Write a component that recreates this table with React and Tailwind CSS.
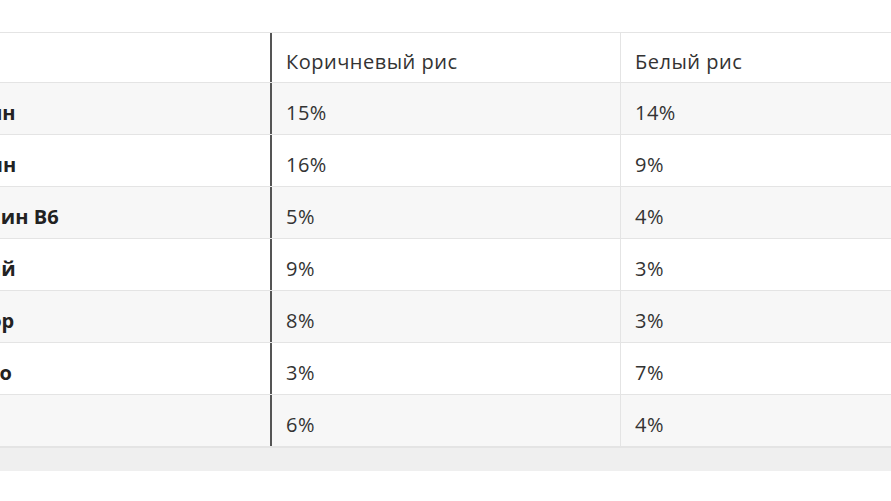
const rows = [
  { name: 'Тиамин', brown: '15%', white: '14%' },
  { name: 'Ниацин', brown: '16%', white: '9%' },
  { name: 'Витамин B6', brown: '5%', white: '4%' },
  { name: 'Магний', brown: '9%', white: '3%' },
  { name: 'Фосфор', brown: '8%', white: '3%' },
  { name: 'Железо', brown: '3%', white: '7%' },
  { name: 'Цинк', brown: '6%', white: '4%' },
]

function Row({ name, brown, white, shaded }) {
  return (
    <div className={`flex h-[52px] border-b border-[#e4e4e4] ${shaded ? 'bg-[#f7f7f7]' : 'bg-white'}`}>
      <div className="w-[353px] shrink-0 flex items-center pl-4 pt-2 text-[#222] font-bold tracking-normal">{name}</div>
      <div className="w-[350px] shrink-0 flex items-center pl-[14px] pt-2 border-l-2 border-[#555]">{brown}</div>
      <div className="flex-1 flex items-center pl-[14px] pt-2 border-l border-[#e4e4e4]">{white}</div>
    </div>
  )
}

export default function App() {
  return (
    <div className="w-[891px] h-[501px] bg-white overflow-hidden pt-8 text-[20px] tracking-[0.5px] text-[#333]" style={{ fontFamily: '"Open Sans", Lato, sans-serif' }}>
      <div className="border-t border-[#e4e4e4] -ml-[83px] w-[1100px]">
        <div className="flex h-[50px] border-b border-[#e4e4e4] bg-white">
          <div className="w-[353px] shrink-0" />
          <div className="w-[350px] shrink-0 flex items-center pl-[14px] pt-2 border-l-2 border-[#555]">Коричневый рис</div>
          <div className="flex-1 flex items-center pl-[14px] pt-2 border-l border-[#e4e4e4]">Белый рис</div>
        </div>
        {rows.map((r, i) => (
          <Row key={r.name} {...r} shaded={i % 2 === 0} />
        ))}
      </div>
      <div className="h-6 bg-[#efefef] border-t border-[#e4e4e4]" />
    </div>
  )
}
